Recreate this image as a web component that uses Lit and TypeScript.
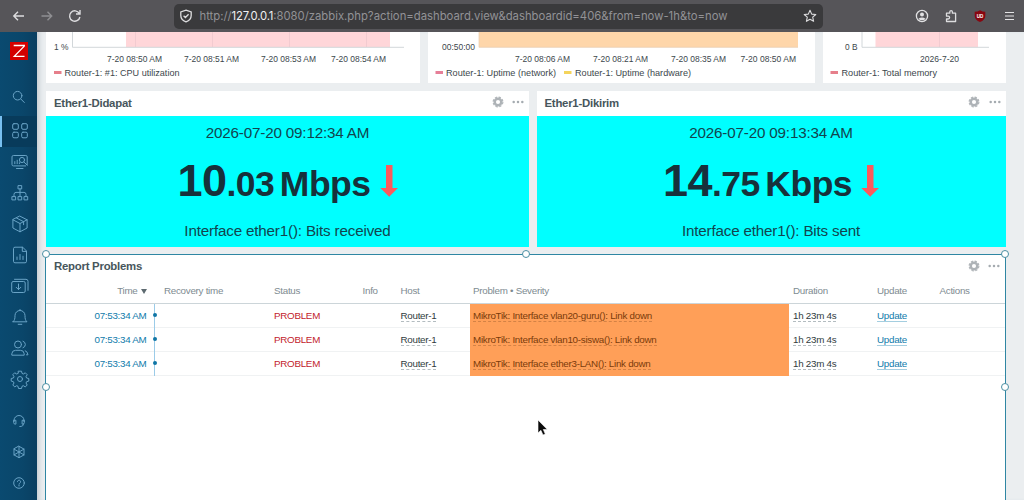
import { LitElement, html, svg, css } from "lit";
import { customElement, property } from "lit/decorators.js";

const gear = html`<svg class="gear" viewBox="0 0 12 12" width="12" height="12"><circle cx="6" cy="6" r="3.3" fill="none" stroke="#aeb3b7" stroke-width="2.5"/><circle cx="6" cy="6" r="4.9" fill="none" stroke="#aeb3b7" stroke-width="1.1" stroke-dasharray="2.4 1.45"/></svg>`;
const dots = html`<svg class="dots" viewBox="0 0 12 4" width="12" height="4" fill="#a5abb0"><circle cx="1.7" cy="2" r="1.25"/><circle cx="6" cy="2" r="1.25"/><circle cx="10.3" cy="2" r="1.25"/></svg>`;

const navIcons = [
  svg`<rect x="2.7" y="2.7" width="5.6" height="5.6" rx="1.3"/><rect x="11.7" y="2.7" width="5.6" height="5.6" rx="1.3"/><rect x="2.7" y="11.2" width="5.6" height="5.6" rx="1.3"/><rect x="11.7" y="11.2" width="5.6" height="5.6" rx="1.3"/>`,
  svg`<path d="M17.2 12.5v-7.6a1.4 1.4 0 0 0-1.4-1.4H3.4A1.4 1.4 0 0 0 2 4.900v7.6a1.4 1.4 0 0 0 1.4 1.4h12.3M6.5 16.5h6.5M4.8 11.7V9.6M7.2 11.7V8.2M9.4 11.7v-1"/><circle cx="12" cy="8" r="2.6"/><path d="M13.9 10l3.4 3.3"/>`,
  svg`<rect x="8.4" y="2.6" width="3.3" height="3.3"/><path d="M10 5.9v7.5M4 13.4v-2q0-2 2-2h8q2 0 2 2v2"/><rect x="2.3" y="13.6" width="3.3" height="3.3"/><rect x="8.4" y="13.6" width="3.3" height="3.3"/><rect x="14.4" y="13.6" width="3.3" height="3.3"/>`,
  svg`<path d="M10 2.2l7.1 3.6v8.2L10 17.8 2.9 14V5.8zM2.9 5.8L10 9.5l7.1-3.7M10 9.5v8.3M6.5 4l7.1 3.7v3"/>`,
  svg`<path d="M12.3 2.2H5a1.5 1.5 0 0 0-1.5 1.5v12.6A1.5 1.5 0 0 0 5 17.8h10a1.5 1.5 0 0 0 1.5-1.5V6.4zM12.3 2.2v4.2h4.2M7 14.5V12M10 14.5V9.5M13 14.5v-3.3"/>`,
  svg`<rect x="1.7" y="5.5" width="13.5" height="11" rx="1.5"/><path d="M4.5 3.3h11.500a2 2 0 0 1 2 2v9M8.5 8v5.5M6.2 11.3l2.3 2.3 2.3-2.3"/>`,
  svg`<path d="M3 14.8h14c-1.7-1.5-2-3-2-6.3a5 5 0 0 0-10 0c0 3.300-.3 4.800-2 6.300zM8.200 17.300h3.600M10 3.300v-.8"/>`,
  svg`<circle cx="8" cy="6.500" r="3.500"/><path d="M1.800 16.800v-1a3.800 3.800 0 0 1 3.800-3.500h4.800a3.800 3.800 0 0 1 3.800 3.500v1zM13 3.200a3.500 3.500 0 0 1 0 6.600M15.200 12.700q2.500.9 2.800 4.100h-1.500"/>`,
  svg`<circle cx="10" cy="10" r="2.500"/><path d="M8.500 2.200h3l.5 2.200 1.300.6 2-1.200 1.900 1.900-1.200 2 .6 1.300 2.200.5v2.600l-2.200.6-.6 1.300 1.200 2-1.900 1.900-2-1.200-1.300.6-.5 2.200h-3L8 17.300l-1.300-.6-2 1.200-1.900-1.900 1.200-2-.6-1.300-2.200-.6V9.500L3.400 9 4 7.700l-1.200-2 1.900-1.900 2 1.200L8 4.400z"/>`,
];
const footIcons = [
  svg`<path d="M5 10.500V9.500a5 5 0 0 1 10 0v1M5 9.300h1.900v3.800H6.200A1.500 1.500 0 0 1 4.700 11.600V9.600M15 9.300h-1.900v3.800h.7a1.500 1.500 0 0 0 1.500-1.500V9.600M14.300 13.200c0 1.700-1 2.300-3.500 2.300"/>`,
  svg`<path d="M10 4.300l5 2.800v5.800l-5 2.800-5-2.800V7.100zM5 7.100l5 2.900 5-2.900M10 10v5.700M5 12.900l5-2.900 5 2.900M10 4.300V10"/>`,
  svg`<circle cx="10" cy="10" r="5.300"/><path d="M8.400 8.700a1.600 1.600 0 1 1 2.400 1.400q-.8.400-.8 1.100M10 12.300v.7"/>`,
];
const navIcon = (shape: unknown) => html`<svg viewBox="0 0 20 20" width="20" height="20" fill="none" stroke="#69a3c6" stroke-width="1" stroke-linejoin="round" stroke-linecap="round">${shape}</svg>`;

@customElement("browser-bar")
class BrowserBar extends LitElement {
  static styles = css`
    :host { display: flex; align-items: center; height: 32px; background: #565559; box-sizing: border-box; color: #dcdcde; font-family: Inter, sans-serif; }
    svg { display: block; flex: none; }
    .nav { display: flex; width: 174px; padding-left: 11px; box-sizing: border-box; gap: 12px; }
    .url { display: flex; align-items: center; width: 649px; height: 25px; box-sizing: border-box; background: #3a3a3c; border-radius: 5px; padding: 0 6px 0 5px; }
    .address { flex: 1; margin-left: 6.500px; font-size: 11.300px; line-height: 25px; color: #929296; white-space: nowrap; }
    .host { color: #f0f0f2; letter-spacing: -.15px; }
    .tools { flex: 1; display: flex; align-items: center; padding: 0 9px 0 92px; justify-content: space-between; }
  `;
  render() {
    return html`
      <div class="nav">
        <svg width="16" height="16" viewBox="0 0 16 16" fill="none" stroke="#dddddf" stroke-width="1.400"><path d="M13 8H3M7 3.800L2.800 8 7 12.200"/></svg>
        <svg width="16" height="16" viewBox="0 0 16 16" fill="none" stroke="#8f8f92" stroke-width="1.400"><path d="M2.500 8h10M8.500 3.800L12.700 8 8.500 12.200"/></svg>
        <svg width="16" height="16" viewBox="0 0 16 16" fill="none" stroke="#dddddf" stroke-width="1.400"><path d="M12.300 5.400A5.200 5.200 0 1 0 12.900 9M13 2v4H9"/></svg>
      </div>
      <div class="url">
        <svg width="14" height="14" viewBox="0 0 14 14" fill="none" stroke="#dddddf" stroke-width="1.300"><path d="M7 1.200l5.200 1.700v3.600c0 3-2.200 5.200-5.200 6.300-3-1.100-5.200-3.300-5.200-6.300V2.900zM4.600 6.700l1.800 1.800 3.200-3.300"/></svg>
        <span class="address">http://<span class="host">127.0.0.1</span>:8080/zabbix.php?action=dashboard.view&amp;dashboardid=406&amp;from=now-1h&amp;to=now</span>
        <svg width="14" height="14" viewBox="0 0 14 14" fill="none" stroke="#dddddf" stroke-width="1.100" stroke-linejoin="round"><path d="M7 1.300l1.700 3.800 4.100.4-3.100 2.700.9 4.100L7 10.200l-3.600 2.100.9-4.100L1.200 5.500l4.100-.4z"/></svg>
      </div>
      <div class="tools">
        <svg width="14" height="14" viewBox="0 0 14 14"><circle cx="7" cy="7" r="5.600" fill="none" stroke="#e2e2e4" stroke-width="1.300"/><circle cx="7" cy="5.500" r="2" fill="#e2e2e4"/><path d="M3.400 9.700q3.600-2.400 7.200 0a5 5 0 0 1-7.200 0z" fill="#e2e2e4"/></svg>
        <svg width="14" height="14" viewBox="0 0 14 14" fill="none" stroke="#dddddf" stroke-width="1.300" stroke-linejoin="round"><path d="M1.500 4.200h3.300V3a1.300 1.300 0 0 1 2.600 0v1.200h3.200v8.300H1.500V10h1.700a1.400 1.400 0 0 0 0-2.800H1.500z"/></svg>
        <svg width="14" height="14" viewBox="0 0 14 14"><path d="M6 1.200q2.500 1.500 5.300 1.600v4.400Q11 11 6 13 1 11 .7 7.200V2.800Q3.500 2.700 6 1.200z" fill="#880610"/><text x="6" y="8.500" font-size="4.500" font-weight="700" text-anchor="middle" fill="#fff">UD</text></svg>
        <svg width="11" height="14" viewBox="0 0 11 14" stroke="#e4e4e6" stroke-width="1.200"><path d="M1 3.500h9M1 7h9M1 10.500h9"/></svg>
      </div>`;
  }
}

@customElement("side-nav")
class SideNav extends LitElement {
  static styles = css`
    :host { display: flex; flex-direction: column; width: 37px; height: 468px; background: linear-gradient(90deg, #0a4a70, #0a466a 60%, #0a3f61); flex: none; box-sizing: border-box; }
    svg { display: block; }
    .logo { height: 18px; padding: 10px 0 0 9.500px; }
    .search { height: 20px; padding: 27px 0 8.500px 9px; }
    .item { height: 31px; display: flex; align-items: center; padding-left: 9.500px; box-sizing: border-box; }
    .active { background: #083b5b; border-left: 2.500px solid #78bff0; padding-left: 7.500px; }
    .foot { margin-top: 11px; }
    .foot .item { padding-left: 8.500px; }
  `;
  render() {
    return html`
      <div class="logo"><svg width="18" height="18" viewBox="0 0 18 18"><path fill="#d40000" d="M0 0h18v18H0z"/><path d="M3.700 3.500h10.600v.6L4.300 14.300h10.200" fill="none" stroke="#fff" stroke-width="1.300"/></svg></div>
      <div class="search">${navIcon(svg`<circle cx="8.600" cy="8.700" r="4.300"/><path d="M11.800 12l3.500 3.500"/>`)}</div>
      ${navIcons.map((shape, i) => html`<div class="item ${i === 0 ? "active" : ""}">${navIcon(shape)}</div>`)}
      <div class="foot">${footIcons.map((shape) => html`<div class="item">${navIcon(shape)}</div>`)}</div>`;
  }
}

@customElement("item-value")
class ItemValue extends LitElement {
  @property() heading = "";
  @property() date = "";
  @property() whole = "";
  @property() fraction = "";
  @property() units = "";
  @property() description = "";
  static styles = css`
    :host { display: flex; flex-direction: column; height: 155.500px; background: #fff; color: #1f2c33; }
    svg { display: block; }
    header { display: flex; align-items: center; height: 25px; padding: 0 5px 0 8px; box-sizing: border-box; }
    h4 { margin: 0; flex: 1; font-size: 11.400px; letter-spacing: -.25px; line-height: 25px; color: #47565c; }
    .gear { margin: -3px 8.500px 0 0; }
    .dots { margin-top: -3px; }
    .body { flex: 1; background: #00ffff; display: flex; flex-direction: column; align-items: center; box-sizing: border-box; padding-top: 6.500px; color: #12444e; }
    .line { font-size: 15.200px; letter-spacing: -.17px; line-height: 20px; white-space: nowrap; }
    .value { display: flex; align-items: baseline; height: 78px; line-height: 75px; color: #17313b; font-weight: 700; letter-spacing: -.5px; }
    .whole { font-size: 45px; }
    .rest { font-size: 35.500px; }
    .units { font-size: 35.500px; margin-left: 5.500px; }
    .arrow { margin-left: 9px; align-self: center; margin-top: -2px; }
  `;
  render() {
    return html`
      <header><h4>${this.heading}</h4>${gear}${dots}</header>
      <div class="body">
        <div class="line">${this.date}</div>
        <div class="value"><span class="whole">${this.whole}</span><span class="rest">${this.fraction}</span><span class="units">${this.units}</span>
          <svg class="arrow" width="18" height="32" viewBox="0 0 18 32"><path d="M6 0h6.500v23H18l-8.800 8.800L.3 23H6z" fill="#fb5a5c"/></svg></div>
        <div class="line">${this.description}</div>
      </div>`;
  }
}

const problems = ["MikroTik: Interface vlan20-guru(): Link down", "MikroTik: Interface vlan10-siswa(): Link down", "MikroTik: Interface ether3-LAN(): Link down"];

@customElement("problem-report")
class ProblemReport extends LitElement {
  static styles = css`
    :host { display: block; position: relative; height: 260px; background: #fff; border: 1.500px solid #2f86a3; border-bottom: 0; box-sizing: border-box; margin: 0 -.5px 0 -1px; font-size: 9.800px; letter-spacing: -.27px; color: #303b40; }
    svg { display: block; }
    header { display: flex; align-items: center; height: 23px; padding: 0 5px 0 8px; box-sizing: border-box; }
    h4 { margin: 0; flex: 1; font-size: 11.400px; letter-spacing: -.25px; line-height: 24px; color: #47565c; }
    .gear { margin-right: 8.500px; }
    .row { display: grid; grid-template-columns: 118px 110px 88.500px 38px 72.500px 320px 84px 62.500px 1fr; height: 24.200px; box-sizing: border-box; line-height: 24px; white-space: nowrap; border-bottom: 1px solid #f0f2f3; }
    .head { height: 25px; line-height: 24px; color: #7e8b91; border-bottom-color: #ccd5d9; margin-top: 1px; }
    .time { box-sizing: border-box; width: 109px; height: 24.200px; padding-right: 7.500px; text-align: right; color: #0f7bab; border-right: 1px solid #9bcbe8; position: relative; }
    .head > .time { color: #7e8b91; border-color: transparent; height: 24px; }
    .dot { position: absolute; right: -2.500px; top: 9px; width: 4px; height: 4px; border-radius: 50%; background: #0f75a5; }
    .sort { display: inline-block; border: 3px solid transparent; border-top: 5px solid #5d6a70; border-bottom: 0; margin-left: 3px; }
    .bad { color: #c2222d; }
    .row > .severity { background: #ff9f58; color: #7a3b0b; margin-left: -3.500px; padding-left: 3.500px; width: 315.800px; }
    .link { display: inline-block; line-height: 10px; border-bottom: 1px dashed #b3bcc0; padding-bottom: 0; }
    .severity .link { border-color: #d48245; }
    .update { color: #0f7bab; border-bottom: 1px solid #a4cee0; }
    .handle { position: absolute; width: 6px; height: 6px; border: 1px solid #4b8fa3; border-radius: 50%; background: #fff; transform: translate(-50%, -50%); }
    .n { top: -.5px; left: 50%; }
    .nw { top: -.5px; left: -.5px; }
    .ne { top: -.5px; left: 100%; }
    .w { top: 132px; left: -.5px; }
    .e { top: 132px; left: 100%; }
  `;
  render() {
    return html`
      <header><h4>Report Problems</h4>${gear}${dots}</header>
      <div class="row head"><span class="time">Time<i class="sort"></i></span><span>Recovery time</span><span>Status</span><span>Info</span><span>Host</span><span>Problem • Severity</span><span>Duration</span><span>Update</span><span>Actions</span></div>
      ${problems.map((p) => html`<div class="row"><span class="time">07:53:34 AM<i class="dot"></i></span><span></span><span class="bad">PROBLEM</span><span></span><span><span class="link">Router-1</span></span><span class="severity"><span class="link">${p}</span></span><span><span class="link">1h 23m 4s</span></span><span><span class="link update">Update</span></span><span></span></div>`)}
      ${["nw", "n", "ne", "w", "e"].map((c) => html`<i class="handle ${c}"></i>`)}`;
  }
}

type Label = [string, number, number, number];
const label = ([text, x, y, width]: Label) => svg`<text x=${x} y=${y} textLength=${width} lengthAdjust="spacingAndGlyphs">${text}</text>`;

@customElement("app-root")
class AppRoot extends LitElement {
  static styles = css`
    :host { display: block; width: 1024px; height: 500px; overflow: hidden; position: relative; font-family: "Liberation Sans", Arial, sans-serif; background: #ebeef0; }
    svg { display: block; }
    .page { display: flex; height: 468px; overflow: hidden; }
    main { flex: 1; padding: 0 18.500px 0 9px; box-shadow: inset 5px 0 5px -3px #c3cbd0; }
    .charts { display: grid; grid-template-columns: 374px 387px 182.500px; gap: 8px; }
    .card { background: #fff; height: 51px; font-size: 9.800px; fill: #3c474c; }
    .values { display: grid; grid-template-columns: 483px 469px; gap: 7.500px; margin: 8px 0 7px; }
    .pointer { position: absolute; left: 537px; top: 419px; }
  `;
  render() {
    return html`
      <browser-bar></browser-bar>
      <div class="page">
        <side-nav></side-nav>
        <main>
          <div class="charts">
            <svg class="card" width="374" viewBox="46 32 374 51">
              <path d="M126 32h264v15.300H126z" fill="#ffd6d9"/><path d="M135.500 32v15M212.500 32v15M289.500 32v15M366.500 32v15" stroke="#e9c4c9" stroke-width=".6"/>
              <path d="M72.500 32v15.300H404" fill="none" stroke="#d2d7da"/><path d="M54 71h7.500v3H54z" fill="#e67f8b"/>
              ${([["1 %", 54, 50.3, 14.5], ["7-20 08:50 AM", 107, 61.9, 55], ["7-20 08:51 AM", 184, 61.9, 55], ["7-20 08:53 AM", 261, 61.9, 55], ["7-20 08:54 AM", 331, 61.9, 55], ["Router-1: #1: CPU utilization", 64.5, 76.4, 115]] as Label[]).map(label)}
            </svg>
            <svg class="card" width="387" viewBox="428 32 387 51">
              <path d="M479 32h319v15.300H479z" fill="#fed6aa"/><path d="M479 32v15.300h319" fill="none" stroke="#ead0b5" stroke-width=".8"/>
              <path d="M435.500 71h7.500v3h-7.500z" fill="#e67f98"/><path d="M564 71h7.500v3H564z" fill="#f4d45c"/>
              ${([["00:50:00", 442, 50.3, 33], ["7-20 08:06 AM", 515, 61.9, 55], ["7-20 08:21 AM", 593, 61.9, 55], ["7-20 08:35 AM", 671, 61.9, 55], ["7-20 08:50 AM", 740.5, 61.9, 55.5], ["Router-1: Uptime (network)", 446, 76.4, 110], ["Router-1: Uptime (hardware)", 575, 76.4, 116]] as Label[]).map(label)}
            </svg>
            <svg class="card" width="182.5" viewBox="823 32 182.5 51">
              <path d="M875.500 32h102.500v15.300H875.500z" fill="#ffd6d9"/><path d="M939.500 32v15" stroke="#e9c4c9" stroke-width=".6"/>
              <path d="M862 32v15.300h127" fill="none" stroke="#d2d7da"/><path d="M830.500 71h7.500v3h-7.500z" fill="#e67f8b"/>
              ${([["0 B", 845, 50.3, 12.5], ["2026-7-20", 920, 61.9, 39], ["Router-1: Total memory", 841.5, 76.4, 95.5]] as Label[]).map(label)}
            </svg>
          </div>
          <div class="values">
            <item-value heading="Ether1-Didapat" date="2026-07-20 09:12:34 AM" whole="10" fraction=".03" units="Mbps" description="Interface ether1(): Bits received"></item-value>
            <item-value heading="Ether1-Dikirim" date="2026-07-20 09:13:34 AM" whole="14" fraction=".75" units="Kbps" description="Interface ether1(): Bits sent"></item-value>
          </div>
          <problem-report></problem-report>
        </main>
      </div>
      <svg class="pointer" width="11" height="18" viewBox="0 0 11 18"><path d="M1 1v13l2.900-2.700L6 16l2.300-1-2-4.500h4z" fill="#0b0b0b" stroke="#fff" stroke-width=".6"/></svg>`;
  }
}
